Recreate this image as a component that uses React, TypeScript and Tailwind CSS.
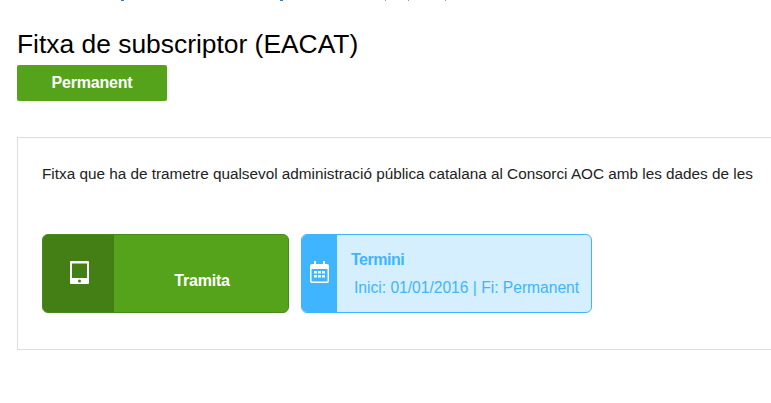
const sans = "font-['Liberation_Sans',Arial,sans-serif]";

function TabletIcon() {
  return (
    <svg width="19" height="23" viewBox="0 0 19 23" className="block">
      <path
        fill="#fff"
        fillRule="evenodd"
        d="M1 0h17a1 1 0 0 1 1 1v21a1 1 0 0 1-1 1H1a1 1 0 0 1-1-1V1a1 1 0 0 1 1-1Zm1 2.500v14.500h15V2.500H2Zm7.500 16a1.500 1.500 0 1 0 0 3 1.500 1.500 0 0 0 0-3Z"
      />
    </svg>
  );
}

function CalendarIcon() {
  return (
    <svg width="19" height="22" viewBox="0 0 19 22" className="block">
      <path
        fill="#fff"
        fillRule="evenodd"
        d="M4 0h2v3h7V0h2v3h2a2 2 0 0 1 2 2v15a2 2 0 0 1-2 2H2a2 2 0 0 1-2-2V5a2 2 0 0 1 2-2h2V0ZM1.500 8v12a.5.5 0 0 0 .5.5h15a.5.5 0 0 0 .5-.5V8h-16Z"
      />
      <path
        fill="#fff"
        d="M4 10h3v2.500H4zM8 10h3v2.500H8zM12 10h3v2.500h-3zM4 14h3v2.500H4zM8 14h3v2.500H8zM12 14h3v2.500h-3z"
      />
    </svg>
  );
}

// tails of the breadcrumb line that is scrolled off the top
function ClippedBreadcrumb() {
  return (
    <div className="flex h-[1px]">
      <span className="ml-[104px] w-[3px] bg-[#2f7fc1]" />
      <span className="ml-[156px] w-[3px] bg-[#2f7fc1]" />
      <span className="ml-[102px] w-[1px] bg-[#999999]" />
      <span className="ml-[22px] w-[1px] bg-[#999999]" />
      <span className="ml-[36px] w-[1px] bg-[#999999]" />
    </div>
  );
}

export default function App() {
  return (
    <div className={`h-[403px] w-[771px] overflow-hidden bg-white pl-[17px] text-black ${sans}`}>
      <ClippedBreadcrumb />

      <h1 className="pt-[27px] text-[26.4px] leading-[32px] font-normal">Fitxa de subscriptor (EACAT)</h1>

      <div className="mt-[5px] flex h-[36px] w-[150px] items-center justify-center rounded-[2px] bg-[#55a31a] text-[16px] font-bold tracking-[-0.2px] text-white">
        Permanent
      </div>

      <section className="mt-[36px] h-[213px] w-[800px] border border-[#dddddd] pt-[26px] pl-[24px]">
        <p className="text-[15.3px] leading-[20px] whitespace-nowrap text-[#222222]">
          Fitxa que ha de trametre qualsevol administració pública catalana al Consorci AOC amb les dades de les
        </p>

        <div className="mt-[50px] flex gap-[12px]">
          <div className="flex h-[79px] w-[247px] overflow-hidden rounded-[6px] border border-[#4a8a1c] bg-[#55a31a]">
            <div className="flex w-[71px] items-center justify-center bg-[#437f15] pb-[2px] pl-[2px]">
              <TabletIcon />
            </div>
            <div className="flex flex-1 items-center justify-center pt-[15px] pl-[2px] text-[16px] font-bold tracking-[-0.2px] text-white">
              Tramita
            </div>
          </div>

          <div className="flex h-[79px] w-[291px] overflow-hidden rounded-[6px] border border-[#3fb4ff] bg-[#d6efff] text-[#3fb4ff]">
            <div className="flex w-[35px] items-center justify-center bg-[#3fb4ff] pb-[4px]">
              <CalendarIcon />
            </div>
            <div className="flex-1 pt-[15px] pl-[14px]">
              <div className="text-[16px] leading-[20px] font-bold tracking-[-0.5px]">Termini</div>
              <div className="mt-[8px] pl-[3px] text-[15.6px] leading-[20px]">Inici: 01/01/2016 | Fi: Permanent</div>
            </div>
          </div>
        </div>
      </section>
    </div>
  );
}
